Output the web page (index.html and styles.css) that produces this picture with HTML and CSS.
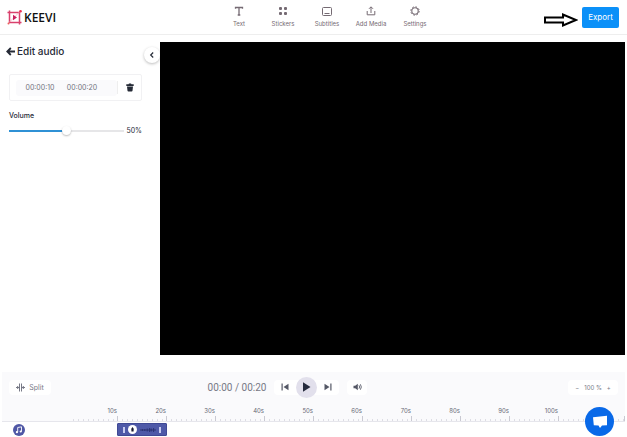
FILE: index.html
```html
<!DOCTYPE html>
<html lang="en">
<head>
<meta charset="utf-8">
<meta name="viewport" content="width=device-width, initial-scale=1">
<title>Keevi – Edit audio</title>
<link rel="stylesheet" href="styles.css">
</head>
<body>
<header class="topbar">
  <a class="brand" href="#">
    <svg width="16" height="16" viewBox="0 0 16 16" fill="none" aria-hidden="true">
      <path d="M2.500 1.500V13.500H14.500M0.500 3.500H12.500V15.500" stroke="#d9416d" stroke-width="1.500"/>
      <path d="M2 13.500 14 1.500" stroke="#f5a0b5" stroke-width="0.700"/>
      <circle cx="13.500" cy="2.200" r="1.300" fill="#ee2f52"/>
      <circle cx="1.500" cy="14.500" r="1" fill="#ee5f58"/>
      <path d="M6 5.800 10 8.500 6 11.200Z" fill="#c9205f"/>
    </svg>
    <span>KEEVI</span>
  </a>
  <nav class="tools" aria-label="Tools">
    <button class="tool" type="button">
      <svg width="10" height="10" viewBox="0 0 10 10" fill="none" stroke="currentColor" stroke-width="1.300"><path d="M1.500 2.800V1.500H8.500V2.800M5 1.500V9M3.700 9H6.300"/></svg>
      Text
    </button>
    <button class="tool" type="button">
      <svg width="10" height="10" viewBox="0 0 10 10" fill="currentColor"><rect x="1" y="1" width="3" height="3" rx="1"/><rect x="6" y="1" width="3" height="3" rx="1"/><rect x="1" y="6" width="3" height="3" rx="1"/><rect x="6" y="6" width="3" height="3" rx="1"/></svg>
      Stickers
    </button>
    <button class="tool" type="button">
      <svg width="10" height="10" viewBox="0 0 10 10" fill="none" stroke="currentColor"><rect x="0.500" y="1.500" width="9" height="8" rx="1"/><path d="M2.500 7.500H7.500"/></svg>
      Subtitles
    </button>
    <button class="tool" type="button">
      <svg width="10" height="10" viewBox="0 0 10 10" fill="none" stroke="currentColor"><path d="M1.200 5V8.800H8.800V5M5 7V1M3 2.800 5 0.800 7 2.800"/></svg>
      Add Media
    </button>
    <button class="tool" type="button">
      <svg width="10" height="10" viewBox="0 0 10 10" fill="none" stroke="currentColor"><circle cx="5" cy="5" r="3.200" stroke-width="1.100"/><circle cx="5" cy="5" r="4.200" stroke-width="1" stroke-dasharray="1.600 1.700"/></svg>
      Settings
    </button>
  </nav>
  <div class="export-area">
    <svg width="34" height="14" viewBox="0 0 34 14" fill="#fff" stroke="#000" stroke-width="2" aria-hidden="true"><path d="M1 4.500H19V1.500L32 7 19 12.500V9.500H1Z"/></svg>
    <button class="export" type="button">Export</button>
  </div>
</header>

<main class="workspace">
  <aside class="sidebar">
    <a class="back" href="#">
      <svg width="9" height="9" viewBox="0 0 9 9" fill="none" stroke="currentColor" stroke-width="1.800" aria-hidden="true"><path d="M9 4.500H1.500M4.800 1 1.300 4.500 4.800 8"/></svg>
      <span>Edit audio</span>
    </a>
    <button class="collapse" type="button" aria-label="Collapse panel">
      <svg width="6" height="8" viewBox="0 0 6 8" fill="none" stroke="currentColor" stroke-width="1.200"><path d="M4.200 1.500 1.700 4 4.200 6.500"/></svg>
    </button>
    <div class="range-card">
      <div class="times">
        <input class="time" type="text" value="00:00:10" aria-label="Start time">
        <input class="time" type="text" value="00:00:20" aria-label="End time">
      </div>
      <button class="trash" type="button" aria-label="Delete audio">
        <svg width="8" height="9" viewBox="0 0 8 9" fill="currentColor"><path d="M0.300 1.200H2.500L3 0.500H5L5.500 1.200H7.700V3H0.300ZM1 3.500H7L6.500 7.700Q6.400 8.500 5.600 8.500H2.400Q1.600 8.500 1.500 7.700Z"/></svg>
      </button>
    </div>
    <label class="volume-label" for="volume">Volume</label>
    <div class="volume">
      <input id="volume" type="range" min="0" max="100" value="50">
      <output for="volume">50%</output>
    </div>
  </aside>
  <section class="preview" aria-label="Preview"></section>
</main>

<section class="timeline">
  <div class="controls">
    <button class="pill split" type="button">
      <svg width="9" height="9" viewBox="0 0 9 9" fill="none" stroke="currentColor" aria-hidden="true"><path d="M3.500 0.500V8.500M5.500 0.500V8.500M0 4.500H3.500M5.500 4.500H9M1.700 3V6M7.300 3V6"/></svg>
      Split
    </button>
    <div class="player">
      <span class="clock">00:00 / 00:20</span>
      <div class="pill transport">
        <button type="button" aria-label="Previous"><svg width="8" height="8" viewBox="0 0 8 8" fill="currentColor"><path d="M0.500 0.500H1.700V7.500H0.500ZM7.500 0.700V7.300L2.500 4Z"/></svg></button>
        <button class="play" type="button" aria-label="Play"><svg width="9" height="10" viewBox="0 0 9 10" fill="currentColor"><path d="M1 0.300 8.500 5 1 9.700Z"/></svg></button>
        <button type="button" aria-label="Next"><svg width="8" height="8" viewBox="0 0 8 8" fill="currentColor"><path d="M0.500 0.700 5.500 4 0.500 7.300ZM6.300 0.500H7.500V7.500H6.300Z"/></svg></button>
      </div>
      <button class="pill sound" type="button" aria-label="Mute"><svg width="9" height="8" viewBox="0 0 9 8" fill="currentColor"><path d="M0.500 2.700H2.200L4.800 0.700V7.300L2.200 5.300H0.500Z"/><path d="M6 2.300Q7.200 4 6 5.700M7.400 1.300Q9.200 4 7.400 6.700" fill="none" stroke="currentColor" stroke-width="0.900"/></svg></button>
    </div>
    <div class="pill zoom">
      <button type="button" aria-label="Zoom out">−</button>
      <span>100 %</span>
      <button type="button" aria-label="Zoom in">+</button>
    </div>
  </div>
  <div class="ruler">
    <span class="mark">10s</span><span class="mark">20s</span><span class="mark">30s</span><span class="mark">40s</span><span class="mark">50s</span><span class="mark">60s</span><span class="mark">70s</span><span class="mark">80s</span><span class="mark">90s</span><span class="mark">100s</span><span class="mark"></span>
  </div>
</section>
<section class="track" aria-label="Audio track">
  <div class="track-head">
    <svg width="12" height="12" viewBox="0 0 12 12" aria-hidden="true"><circle cx="6" cy="6" r="6" fill="#4f57a5"/><path d="M4.700 8.200V3.500L8.500 2.800V7.500" fill="none" stroke="#fff" stroke-width="0.900"/><circle cx="3.900" cy="8.200" r="1.100" fill="#fff"/><circle cx="7.700" cy="7.500" r="1.100" fill="#fff"/></svg>
  </div>
  <div class="clip">
    <span class="grip"></span>
    <svg width="9" height="9" viewBox="0 0 9 9" aria-hidden="true"><circle cx="4.500" cy="4.500" r="4.500" fill="#fff"/><path d="M4.500 2 6 4.200H5.600V6.500H3.400V4.200H3Z" fill="#161830"/></svg>
    <svg class="wave" height="6" viewBox="0 0 20 6" preserveAspectRatio="none" stroke="#29306f" aria-hidden="true"><path d="M0 3H20M3 2V4M6 2V4M9 1.500V4.500M12 1V5M14 1.500V4.500M17 1V5"/></svg>
    <span class="grip"></span>
  </div>
</section>
<button class="chat" type="button" aria-label="Open chat">
  <svg width="16" height="14" viewBox="0 0 16 14" fill="#fff"><path d="M1 2.200 15 0.800V10.300L10 10.500 8 13 6.500 10.600 1.800 10.300Z"/></svg>
</button>
</body>
</html>
```

FILE: styles.css
```css
* {
  box-sizing: border-box;
}

body {
  margin: 0;
  min-height: 100vh;
  display: flex;
  flex-direction: column;
  overflow: hidden;
  background: #fff;
  color: #252a36;
  font-family: Inter, "Liberation Sans", sans-serif;
  font-size: 7px;
}

button,
input {
  font: inherit;
  color: inherit;
  border: 0;
  padding: 0;
  margin: 0;
  background: none;
}

a {
  color: inherit;
  text-decoration: none;
}

svg {
  display: block;
  flex: none;
}

.topbar {
  display: flex;
  align-items: center;
  height: 35px;
  padding: 0 8px 0 7px;
  border-bottom: 1px solid #eee;
}

.brand {
  display: flex;
  align-items: center;
  gap: 1px;
  flex: 0 0 210px;
  font-family: "Open Sans", sans-serif;
  font-size: 12px;
  font-weight: 600;
  color: #111;
}

.tools {
  display: flex;
}

.tool {
  display: flex;
  flex-direction: column;
  align-items: center;
  gap: 4px;
  width: 44px;
  font-size: 6px;
  line-height: 8px;
  white-space: nowrap;
  color: #756a73;
}

.export-area {
  display: flex;
  align-items: center;
  gap: 4px;
  margin-left: auto;
}

.export-area svg {
  margin-top: 5px;
}

.export {
  width: 37px;
  height: 21px;
  border-radius: 2px;
  background: #0b90f8;
  color: #fff;
  font-size: 8px;
}

.workspace {
  display: flex;
  flex: 1;
  padding: 7px 2px 17px 0;
}

.sidebar {
  position: relative;
  flex: 0 0 160px;
  min-width: 0;
  padding: 3px 18px 0 9px;
}

.back {
  display: flex;
  align-items: center;
  gap: 2px;
  margin-left: -3px;
  font-size: 10px;
  font-weight: 500;
  line-height: 13px;
}

.collapse {
  position: absolute;
  top: 5px;
  right: 0;
  display: grid;
  place-items: center;
  width: 16px;
  height: 16px;
  border-radius: 50%;
  background: #fff;
  box-shadow: 0 1px 3px #0004;
}

.range-card {
  display: flex;
  align-items: center;
  height: 27px;
  margin: 16px 0 10px;
  padding-left: 6px;
  border: 1px solid #f1f1f3;
  border-radius: 2px;
}

.times {
  display: flex;
  flex: 1;
  min-width: 0;
  background: #fafafc;
  border-radius: 3px;
}

.time {
  width: 36px;
  height: 16px;
  text-align: center;
  color: #73747e;
}

.times .time:first-child {
  width: 48px;
}

.trash {
  display: grid;
  place-items: center;
  width: 24px;
  height: 13px;
  border-left: 1px solid #eee;
}

.volume-label {
  display: block;
  line-height: 9px;
  font-weight: 500;
}

.volume {
  display: flex;
  align-items: center;
  gap: 2px;
  margin-top: 5px;
}

.volume input {
  flex: 1;
  min-width: 0;
  height: 11px;
  appearance: none;
}

.volume input::-webkit-slider-runnable-track {
  height: 2px;
  background: linear-gradient(90deg, #2f91d5 50%, #e6e6e8 50%);
}

.volume input::-webkit-slider-thumb {
  appearance: none;
  width: 9px;
  height: 9px;
  margin-top: -4px;
  border-radius: 50%;
  background: #fff;
  box-shadow: 0 1px 2px #0004;
}

.preview {
  flex: 1;
  min-width: 0;
  background: #000;
}

.timeline {
  margin: 0 2px;
  background: #fafafc;
  border-bottom: 1px solid #e6e6ec;
}

.controls {
  display: grid;
  grid-template-columns: 1fr auto 1fr;
  align-items: center;
  height: 30px;
  padding: 0 7px;
  color: #777986;
}

.pill {
  display: flex;
  align-items: center;
  justify-content: center;
  height: 15px;
  border-radius: 4px;
  background: #fff;
}

.split {
  justify-self: start;
  gap: 4px;
  width: 42px;
}

.player {
  display: flex;
  align-items: center;
  gap: 8px;
  margin-right: 52px;
}

.clock {
  font-family: Roboto, sans-serif;
  font-size: 10px;
}

.transport {
  gap: 7px;
  padding: 0 7px;
}

.transport button,
.sound {
  color: #555866;
}

.play {
  display: grid;
  place-items: center;
  width: 21px;
  height: 21px;
  border-radius: 50%;
  background: #e2e0ec;
}

.transport .play {
  color: #252a3d;
}

.sound {
  width: 20px;
}

.zoom {
  justify-self: end;
  gap: 5px;
  width: 50px;
  font-size: 6px;
}

.ruler {
  display: flex;
  height: 19px;
  margin-left: 67px;
}

.mark {
  flex: 0 0 49px;
  padding-top: 5px;
  text-align: right;
  font-size: 6px;
  line-height: 8px;
  color: #666874;
  border-right: 1px solid transparent;
  background:
    linear-gradient(#c9c9d2, #c9c9d2) right bottom / 1px 5px no-repeat border-box,
    repeating-linear-gradient(90deg, transparent 0 4px, #dddde4 4px 5px) left bottom / 100% 2px no-repeat;
}

.mark:last-child {
  flex: 1;
}

.track {
  display: flex;
  align-items: center;
  height: 15px;
}

.track-head {
  flex: 0 0 117px;
  padding-left: 13px;
}

.clip {
  display: flex;
  align-items: center;
  gap: 3px;
  width: 50px;
  height: 13px;
  padding: 0 5px;
  background: #4e59a8;
  border: 1px solid #3f4995;
  border-radius: 1px;
}

.grip {
  width: 2px;
  height: 6px;
  background: #c6caef;
}

.wave {
  flex: 1;
  min-width: 0;
}

.chat {
  position: fixed;
  right: 13px;
  bottom: 1px;
  display: grid;
  place-items: center;
  width: 29px;
  height: 29px;
  border-radius: 50%;
  background: #0969e8;
}
```
